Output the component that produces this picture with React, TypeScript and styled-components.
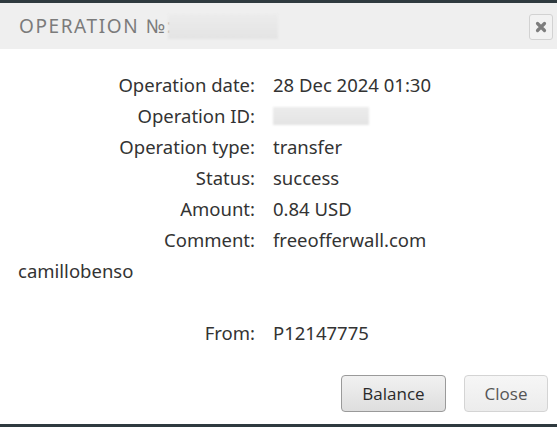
import React from 'react';
import styled, { createGlobalStyle } from 'styled-components';

const GlobalStyle = createGlobalStyle`
  html, body {
    margin: 0;
    padding: 0;
    background: #ffffff;
  }
`;

const Window = styled.div`
  width: 557px;
  height: 427px;
  box-sizing: border-box;
  border-top: 3px solid #2f3a3f;
  border-bottom: 3px solid #2f3a3f;
  background: #ffffff;
  display: flex;
  flex-direction: column;
  font-family: 'Noto Sans', 'Open Sans', sans-serif;
  color: #333333;
`;

const Header = styled.div`
  height: 46px;
  background: #efefef;
  display: flex;
  align-items: center;
  justify-content: space-between;
  padding: 0 4px 0 19px;
`;

const Title = styled.div`
  display: flex;
  align-items: center;
  font-size: 19px;
  letter-spacing: 1.6px;
  color: #7b7b7b;
`;

const Redacted = styled.span<{ $w: number; $h: number; $overlap?: number }>`
  display: inline-block;
  width: ${({ $w }) => $w}px;
  height: ${({ $h }) => $h}px;
  margin-left: ${({ $overlap = 0 }) => -$overlap}px;
  background: linear-gradient(180deg, #ececec, #e4e4e4);
  filter: blur(1px);
`;

const CloseIcon = styled.button`
  width: 24px;
  height: 26px;
  padding: 0;
  border: 1px solid #d2d2d2;
  border-radius: 3px;
  background: #f2f2f2;
  display: flex;
  align-items: center;
  justify-content: center;
  margin-top: 1px;
`;

const Body = styled.div`
  padding: 20px 0 0 0;
  font-size: 18.5px;
  line-height: 31px;
`;

const Details = styled.div`
  display: grid;
  grid-template-columns: 255px auto;
  column-gap: 18px;
`;

const Label = styled.div`
  text-align: right;
  white-space: nowrap;
`;

const Value = styled.div`
  display: flex;
  align-items: center;
  white-space: nowrap;
`;

const Wrapped = styled.div`
  padding-left: 18px;
  height: 62px;
`;

const Footer = styled.div`
  display: flex;
  justify-content: flex-end;
  gap: 18px;
  padding: 27px 9px 0 0;
`;

const Button = styled.button<{ $primary?: boolean }>`
  height: 37px;
  padding: 0;
  width: ${({ $primary }) => ($primary ? 105 : 84)}px;
  border-radius: 4px;
  border: 1px solid ${({ $primary }) => ($primary ? '#9a9a9a' : '#d4d4d4')};
  background: ${({ $primary }) =>
    $primary
      ? 'linear-gradient(180deg, #f1f1f1, #dedede)'
      : 'linear-gradient(180deg, #f6f6f6, #ececec)'};
  color: ${({ $primary }) => ($primary ? '#2a2a2a' : '#555555')};
  font-family: 'Open Sans', 'Noto Sans', sans-serif;
  font-size: 17px;
`;

const rows: [string, React.ReactNode][] = [
  ['Operation date:', '28 Dec 2024 01:30'],
  ['Operation ID:', <Redacted $w={96} $h={18} />],
  ['Operation type:', 'transfer'],
  ['Status:', 'success'],
  ['Amount:', '0.84 USD'],
  ['Comment:', 'freeofferwall.com'],
];

const App: React.FC = () => (
  <>
    <GlobalStyle />
    <Window>
      <Header>
        <Title>
          OPERATION №:
          <Redacted $w={110} $h={25} $overlap={5} />
        </Title>
        <CloseIcon aria-label="close">
          <svg width="12" height="12" viewBox="0 0 12 12">
            <path d="M2.5 2.5 L9.5 9.5 M9.5 2.5 L2.5 9.5" stroke="#7d7d7d" strokeWidth="3.2" strokeLinecap="round" />
          </svg>
        </CloseIcon>
      </Header>
      <Body>
        <Details>
          {rows.map(([label, value]) => (
            <React.Fragment key={label}>
              <Label>{label}</Label>
              <Value>{value}</Value>
            </React.Fragment>
          ))}
        </Details>
        <Wrapped>camillobenso</Wrapped>
        <Details>
          <Label>From:</Label>
          <Value>P12147775</Value>
        </Details>
      </Body>
      <Footer>
        <Button $primary>Balance</Button>
        <Button>Close</Button>
      </Footer>
    </Window>
  </>
);

export default App;
